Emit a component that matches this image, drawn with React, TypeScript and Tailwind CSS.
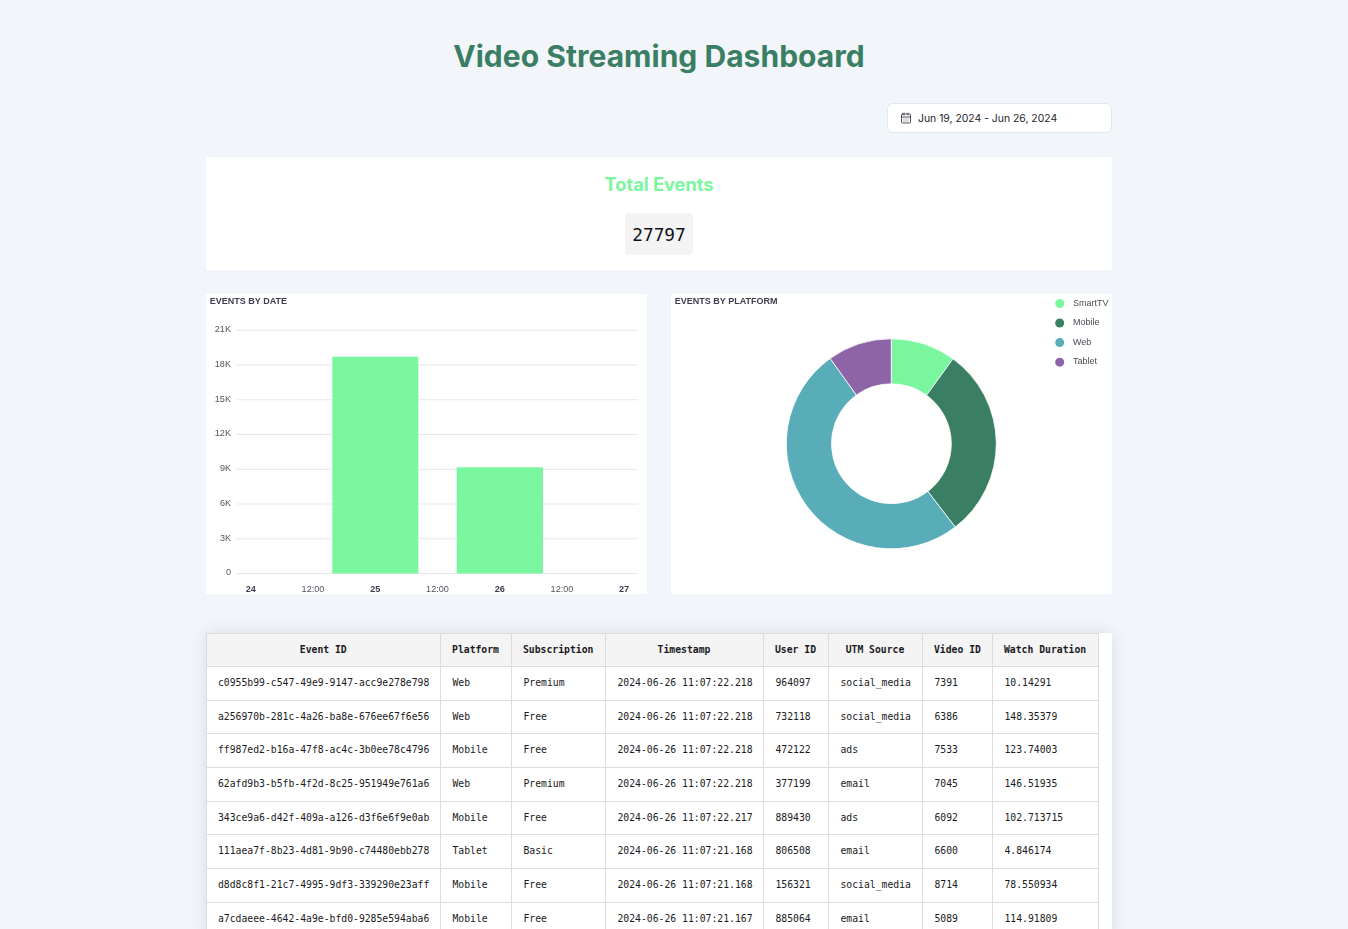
import { CalendarDays } from 'lucide-react';

const MONO = "font-['DejaVu_Sans_Mono',monospace]";
const SVG_FONT = "'Liberation Sans', Arial, sans-serif";

const columns = [
  { label: 'Event ID', width: 'w-[233.5px]' },
  { label: 'Platform', width: 'w-[71px]' },
  { label: 'Subscription', width: 'w-[94px]' },
  { label: 'Timestamp', width: 'w-[158px]' },
  { label: 'User ID', width: 'w-[65px]' },
  { label: 'UTM Source', width: 'w-[94px]' },
  { label: 'Video ID', width: 'w-[70px]' },
  { label: 'Watch Duration', width: 'w-[106px]' },
];

const rows = [
  ['c0955b99-c547-49e9-9147-acc9e278e798', 'Web', 'Premium', '2024-06-26 11:07:22.218', '964097', 'social_media', '7391', '10.14291'],
  ['a256970b-281c-4a26-ba8e-676ee67f6e56', 'Web', 'Free', '2024-06-26 11:07:22.218', '732118', 'social_media', '6386', '148.35379'],
  ['ff987ed2-b16a-47f8-ac4c-3b0ee78c4796', 'Mobile', 'Free', '2024-06-26 11:07:22.218', '472122', 'ads', '7533', '123.74003'],
  ['62afd9b3-b5fb-4f2d-8c25-951949e761a6', 'Web', 'Premium', '2024-06-26 11:07:22.218', '377199', 'email', '7045', '146.51935'],
  ['343ce9a6-d42f-409a-a126-d3f6e6f9e0ab', 'Mobile', 'Free', '2024-06-26 11:07:22.217', '889430', 'ads', '6092', '102.713715'],
  ['111aea7f-8b23-4d81-9b90-c74480ebb278', 'Tablet', 'Basic', '2024-06-26 11:07:21.168', '806508', 'email', '6600', '4.846174'],
  ['d8d8c8f1-21c7-4995-9df3-339290e23aff', 'Mobile', 'Free', '2024-06-26 11:07:21.168', '156321', 'social_media', '8714', '78.550934'],
  ['a7cdaeee-4642-4a9e-bfd0-9285e594aba6', 'Mobile', 'Free', '2024-06-26 11:07:21.167', '885064', 'email', '5089', '114.91809'],
];

function BarChart() {
  const ticks = ['0', '3K', '6K', '9K', '12K', '15K', '18K', '21K'];
  const xLabels = [
    { x: 44.7, text: '24', bold: true },
    { x: 107, text: '12:00' },
    { x: 169.2, text: '25', bold: true },
    { x: 231.5, text: '12:00' },
    { x: 293.7, text: '26', bold: true },
    { x: 356, text: '12:00' },
    { x: 418, text: '27', bold: true },
  ];
  return (
    <svg width="441" height="300" viewBox="0 0 441 300" className="block blur-[0.35px]" fontFamily={SVG_FONT}>
      <text x="3.8" y="10" fontSize="9" fontWeight="700" fill="#3d3d50">EVENTS BY DATE</text>
      {ticks.map((t, i) => {
        const y = 279.5 - i * 34.75;
        return (
          <g key={t}>
            <line x1="31" x2="432" y1={y} y2={y} stroke="#e6e8ee" />
            <text x="25" y={y + 1.8} fontSize="9.1" fill="#55565f" textAnchor="end">{t}</text>
          </g>
        );
      })}
      <rect x="126.3" y="62.7" width="86" height="216.8" fill="#7af79e" />
      <rect x="250.7" y="173.3" width="86.3" height="106.2" fill="#7af79e" />
      {xLabels.map((l, i) => (
        <text key={i} x={l.x} y="298" fontSize="9.1" textAnchor="middle" fontWeight={l.bold ? 700 : 400} fill={l.bold ? '#3d3d50' : '#55565f'}>
          {l.text}
        </text>
      ))}
    </svg>
  );
}

function arc(a0: number, a1: number) {
  const cx = 220.3;
  const cy = 149.8;
  const R = 105;
  const r = 60;
  const pt = (rad: number, a: number) => {
    const t = ((a - 90) * Math.PI) / 180;
    return `${(cx + rad * Math.cos(t)).toFixed(2)} ${(cy + rad * Math.sin(t)).toFixed(2)}`;
  };
  const large = a1 - a0 > 180 ? 1 : 0;
  return `M${pt(R, a0)} A${R} ${R} 0 ${large} 1 ${pt(R, a1)} L${pt(r, a1)} A${r} ${r} 0 ${large} 0 ${pt(r, a0)} Z`;
}

function DonutChart() {
  const slices = [
    { name: 'SmartTV', color: '#7af79e', from: 0, to: 36 },
    { name: 'Mobile', color: '#3a7f63', from: 36, to: 142.5 },
    { name: 'Web', color: '#58adb8', from: 142.5, to: 324.4 },
    { name: 'Tablet', color: '#8e64a9', from: 324.4, to: 360 },
  ];
  return (
    <svg width="441" height="300" viewBox="0 0 441 300" className="block blur-[0.35px]" fontFamily={SVG_FONT}>
      <text x="3.8" y="10" fontSize="9" fontWeight="700" fill="#3d3d50">EVENTS BY PLATFORM</text>
      {slices.map((s) => (
        <path key={s.name} d={arc(s.from, s.to)} fill={s.color} stroke="#fff" strokeWidth="0.8" />
      ))}
      {slices.map((s, i) => (
        <g key={s.name}>
          <circle cx="388.7" cy={9.5 + i * 19.55} r="4.5" fill={s.color} />
          <text x="402" y={11.7 + i * 19.55} fontSize="9" fill="#4c4d55">{s.name}</text>
        </g>
      ))}
    </svg>
  );
}

export default function App() {
  return (
    <div className="h-screen overflow-hidden bg-[#f2f5fa] font-['Inter',sans-serif]">
      <div className="ml-[206px] w-[906px]">
        <h1 className="pt-[36px] text-center text-[30px] leading-[40px] font-bold tracking-[0.03px] text-[#3a7f63]">
          Video Streaming Dashboard
        </h1>

        <div className="mt-[27px] flex justify-end">
          <button className="flex h-[30px] w-[225px] items-center gap-[6px] rounded-md border border-[#e2e8f0] bg-white px-[12px] pt-px text-[10.4px] text-[#1e1e2a]">
            <CalendarDays size={12} strokeWidth={1.5} className="-mt-px" />
            Jun 19, 2024 - Jun 26, 2024
          </button>
        </div>

        <div className="mt-[24px] flex h-[113px] flex-col items-center bg-white pt-[15px]">
          <h2 className="text-[18.2px] leading-[24px] font-bold text-[#7af79e]">Total Events</h2>
          <div className={`mt-[17px] rounded-[4px] bg-[#f4f4f5] px-[7.6px] pt-[9px] pb-[7px] text-[17.8px] leading-[26px] text-[#111118] ${MONO}`}>
            27797
          </div>
        </div>

        <div className="mt-[24px] grid grid-cols-2 gap-[24px]">
          <div className="bg-white"><BarChart /></div>
          <div className="bg-white"><DonutChart /></div>
        </div>

        <div className="mt-[39px] bg-white shadow-[0_0_16px_rgba(0,0,0,0.1)]">
          <table className={`w-[892px] table-fixed border-collapse text-[9.75px] text-[#1a1a22] ${MONO}`}>
            <thead>
              <tr className="h-[33px] bg-[#f4f4f4]">
                {columns.map((c, i) => (
                  <th key={c.label} className={`border border-[#dddddd] text-center font-bold whitespace-nowrap ${i === 0 ? 'px-[11px]' : 'px-[11.5px]'} ${c.width}`}>
                    {c.label}
                  </th>
                ))}
              </tr>
            </thead>
            <tbody>
              {rows.map((row) => (
                <tr key={row[0]} className="h-[33.7px]">
                  {row.map((cell, i) => (
                    <td key={i} className={`border border-[#dddddd] whitespace-nowrap ${i === 0 ? 'px-[11px]' : 'px-[12px]'}`}>{cell}</td>
                  ))}
                </tr>
              ))}
            </tbody>
          </table>
        </div>
      </div>
    </div>
  );
}
